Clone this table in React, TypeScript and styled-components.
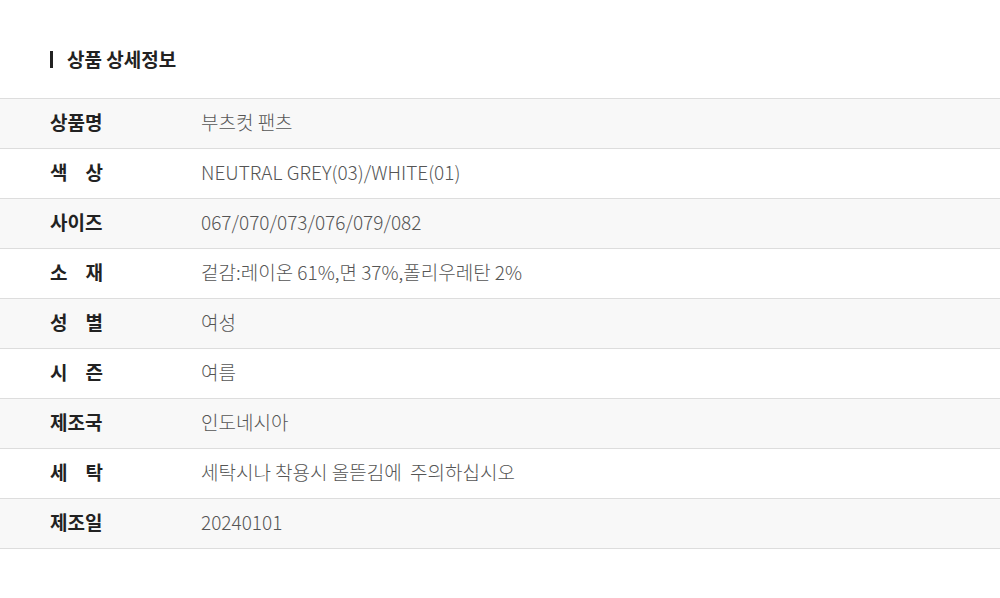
import styled, { createGlobalStyle } from "styled-components";

const GlobalStyle = createGlobalStyle`
    html, body {
        margin: 0;
        padding: 0;
        background: #fff;
        font-family: "Noto Sans CJK KR", "Noto Sans", sans-serif;
    }
`;

const rows: { label: string; value: string; spaced?: boolean }[] = [
    { label: "상품명", value: "부츠컷 팬츠" },
    { label: "색 상", value: "NEUTRAL GREY(03)/WHITE(01)", spaced: true },
    { label: "사이즈", value: "067/070/073/076/079/082" },
    { label: "소 재", value: "겉감:레이온 61%,면 37%,폴리우레탄 2%", spaced: true },
    { label: "성 별", value: "여성", spaced: true },
    { label: "시 즌", value: "여름", spaced: true },
    { label: "제조국", value: "인도네시아" },
    { label: "세 탁", value: "세탁시나 착용시 올뜯김에  주의하십시오", spaced: true },
    { label: "제조일", value: "20240101" },
];

export default function App() {
    return (
        <>
            <GlobalStyle />
            <Page>
                <Title>상품 상세정보</Title>
                <Table>
                    {rows.map((r, i) => (
                        <Row key={r.label} $shaded={i % 2 === 0}>
                            <Label $spaced={r.spaced}>{r.label}</Label>
                            <Value>{r.value}</Value>
                        </Row>
                    ))}
                </Table>
            </Page>
        </>
    );
}

const Page = styled.div`
    width: 1000px;
    padding-top: 45px;
`;

const Title = styled.h2`
    margin: 0 0 25px 50px;
    display: flex;
    align-items: center;
    gap: 14px;
    font-size: 19px;
    font-weight: 700;
    color: #222;
    line-height: 28px;

    &::before {
        content: "";
        width: 3px;
        height: 17px;
        margin-top: 1px;
        background: #222;
    }
`;

const Table = styled.div`
    border-top: 1px solid #ddd;
`;

const Row = styled.div<{ $shaded: boolean }>`
    display: flex;
    align-items: center;
    box-sizing: border-box;
    height: 50px;
    padding: 0 0 3px 50px;
    border-bottom: 1px solid #ddd;
    background: ${p => (p.$shaded ? "#f8f8f8" : "#fff")};
`;

const Label = styled.div<{ $spaced?: boolean }>`
    width: 53px;
    margin-right: 98px;
    font-size: 19px;
    font-weight: 700;
    color: #222;
    white-space: pre;
    line-height: 28px;
    text-align: ${p => (p.$spaced ? "justify" : "left")};
    text-align-last: ${p => (p.$spaced ? "justify" : "left")};
`;

const Value = styled.div`
    font-size: 19px;
    font-weight: 300;
    color: #555;
    white-space: pre;
    line-height: 28px;
`;
